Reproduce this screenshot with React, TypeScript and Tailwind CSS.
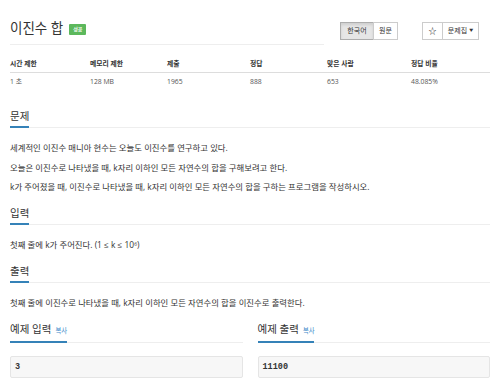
import React from "react";

const stats = [
  { label: "시간 제한", value: "1 초" },
  { label: "메모리 제한", value: "128 MB" },
  { label: "제출", value: "1965" },
  { label: "정답", value: "888" },
  { label: "맞은 사람", value: "653" },
  { label: "정답 비율", value: "48.085%" },
];

function Heading({ children, extra }: { children: React.ReactNode; extra?: React.ReactNode }) {
  return (
    <div className="flex border-b border-[#eeeeee]">
      <h2 className="-mb-px flex items-baseline gap-[4px] border-b-2 border-[#3582b8] pb-[3px] text-[10.5px] leading-[14px] font-normal text-[#333]">
        {children}
        {extra}
      </h2>
    </div>
  );
}

function Para({ children }: { children: React.ReactNode }) {
  return <p className="text-[8.4px] leading-[12px] text-[#333]">{children}</p>;
}

function Sample({ title, value }: { title: string; value: string }) {
  return (
    <div className="flex flex-col">
      <Heading extra={<span className="text-[6.3px] text-[#428bca]">복사</span>}>{title}</Heading>
      <pre className="mt-[13px] h-[22px] rounded-[2px] border border-[#e5e5e5] bg-[#f7f7f7] px-[4px] text-[8.5px] leading-[20px] font-bold text-[#333] font-['Liberation_Mono',monospace]">
        {value}
      </pre>
    </div>
  );
}

export default function App() {
  return (
    <div className="h-[386px] w-[500px] overflow-hidden bg-white px-[10px] font-['Open_Sans','Noto_Sans_CJK_KR',sans-serif]">
      {/* title row */}
      <div className="flex items-start justify-between">
        <div className="w-[314px] border-b border-[#eeeeee] pt-[19px] pb-[7px]">
          <h1 className="flex items-center gap-[6px] text-[13.5px] leading-[18px] font-normal text-[#333]">
            이진수 합
            <span className="mt-[2px] rounded-[1px] bg-[#5cb85c] px-[4px] text-[5px] leading-[11px] font-bold text-white">
              성공
            </span>
          </h1>
        </div>
        <div className="flex gap-[24px] pt-[22px] pr-[11px] text-[7px] leading-[16px] text-[#333]">
          <div className="flex">
            <span className="w-[34px] border border-[#adadad] bg-[#e6e6e6] text-center shadow-[inset_0_2px_3px_rgba(0,0,0,0.1)]">한국어</span>
            <span className="-ml-px w-[25px] border border-[#cccccc] bg-white text-center">원문</span>
          </div>
          <div className="flex">
            <span className="w-[21px] border border-[#cccccc] bg-white text-center text-[8px] font-bold">☆</span>
            <span className="-ml-px flex w-[37px] items-center justify-center gap-[2px] border border-[#cccccc] bg-white">
              문제집
              <span className="text-[4px]">▼</span>
            </span>
          </div>
        </div>
      </div>

      {/* stats table */}
      <div className="mt-[11px] grid grid-cols-[80px_77px_83px_77px_84px_1fr] text-[6.8px]">
        {stats.map((s) => (
          <div key={s.label} className="flex h-[17px] items-center border-b border-[#dddddd] font-bold text-[#333]">
            {s.label}
          </div>
        ))}
        {stats.map((s) => (
          <div key={s.label} className="flex h-[18px] items-center text-[#555]">
            {s.value}
          </div>
        ))}
      </div>

      {/* 문제 */}
      <section className="mt-[18px]">
        <Heading>문제</Heading>
        <div className="mt-[14px] flex flex-col gap-[7.5px]">
          <Para>세계적인 이진수 매니아 현수는 오늘도 이진수를 연구하고 있다.</Para>
          <Para>오늘은 이진수로 나타냈을 때, k자리 이하인 모든 자연수의 합을 구해보려고 한다.</Para>
          <Para>k가 주어졌을 때, 이진수로 나타냈을 때, k자리 이하인 모든 자연수의 합을 구하는 프로그램을 작성하시오.</Para>
        </div>
      </section>

      {/* 입력 */}
      <section className="mt-[13px]">
        <Heading>입력</Heading>
        <div className="mt-[14px]">
          <Para>
            첫째 줄에 k가 주어진다. (1 ≤ k ≤ 10<sup className="text-[5px]">6</sup>)
          </Para>
        </div>
      </section>

      {/* 출력 */}
      <section className="mt-[13px]">
        <Heading>출력</Heading>
        <div className="mt-[14px]">
          <Para>첫째 줄에 이진수로 나타냈을 때, k자리 이하인 모든 자연수의 합을 이진수로 출력한다.</Para>
        </div>
      </section>

      {/* samples */}
      <div className="mt-[13px] grid grid-cols-2 gap-[15px]">
        <Sample title="예제 입력" value="3" />
        <Sample title="예제 출력" value="11100" />
      </div>
    </div>
  );
}
